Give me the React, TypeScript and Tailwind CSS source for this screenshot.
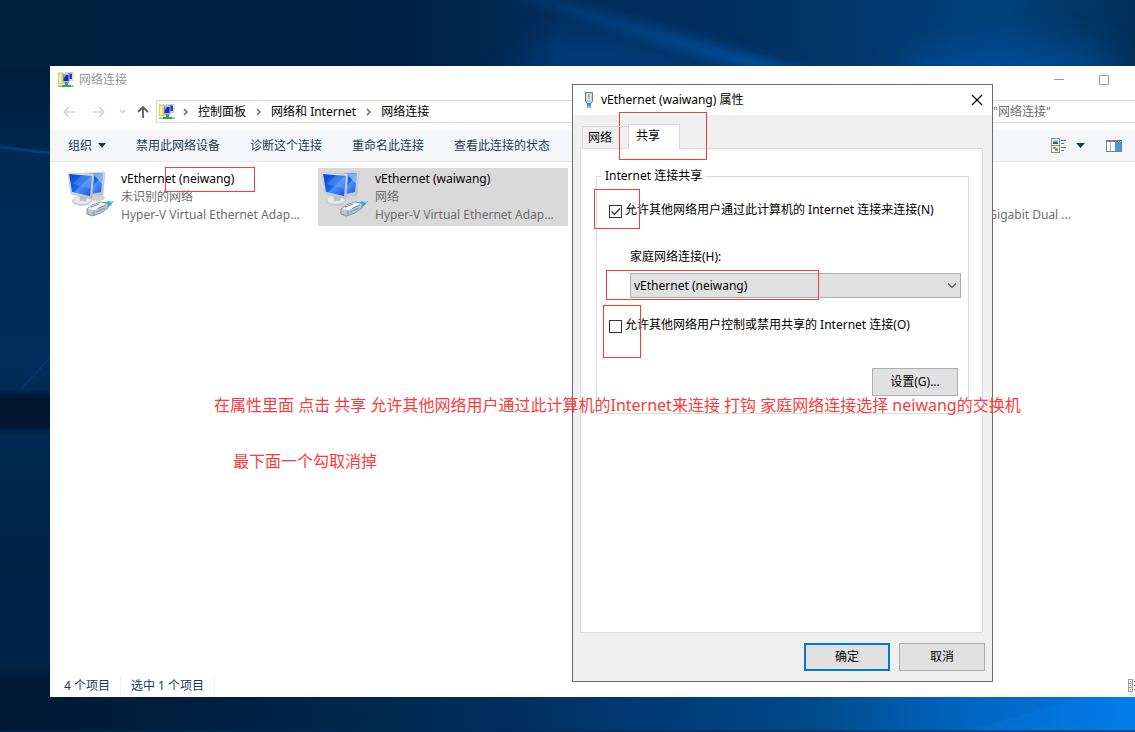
import type { ReactNode } from "react";

type Connection = {
  name?: string;
  status?: string;
  device: string;
  selected?: boolean;
  alignEnd?: boolean;
};

const connections: (Connection | null)[] = [
  {
    name: "vEthernet (neiwang)",
    status: "未识别的网络",
    device: "Hyper-V Virtual Ethernet Adap...",
  },
  {
    name: "vEthernet (waiwang)",
    status: "网络",
    device: "Hyper-V Virtual Ethernet Adap...",
    selected: true,
  },
  null,
  { device: "Gigabit Dual ...", alignEnd: true },
];

const commands = ["禁用此网络设备", "诊断这个连接", "重命名此连接", "查看此连接的状态"];

const crumbs = ["控制面板", "网络和 Internet", "网络连接"];

// Red marker boxes drawn over the desktop
const markers = [
  "left-[165px] top-[167px] w-[90px] h-[25px]",
  "left-[619px] top-[112px] w-[88px] h-[48px]",
  "left-[594px] top-[189px] w-[46px] h-[40px]",
  "left-[606px] top-[270px] w-[213px] h-[30px]",
  "left-[603px] top-[305px] w-[38px] h-[53px]",
];

function Wallpaper() {
  return (
    <svg
      className="absolute inset-0 h-full w-full"
      viewBox="0 0 1135 732"
      preserveAspectRatio="none"
      aria-hidden="true"
    >
      <defs>
        <linearGradient id="top" x1="0" x2="1" y1="0" y2="0">
          <stop offset="0" stopColor="#00203f" />
          <stop offset="0.35" stopColor="#002145" />
          <stop offset="0.5" stopColor="#002e5c" />
          <stop offset="0.65" stopColor="#00305f" />
          <stop offset="0.88" stopColor="#00427a" />
          <stop offset="1" stopColor="#003058" />
        </linearGradient>
        <linearGradient id="left" x1="0" x2="0" y1="0" y2="1">
          <stop offset="0" stopColor="#001e3d" />
          <stop offset="0.12" stopColor="#00264d" />
          <stop offset="0.13" stopColor="#002a54" />
          <stop offset="0.45" stopColor="#002d5a" />
          <stop offset="0.485" stopColor="#002b55" />
          <stop offset="0.5" stopColor="#00152d" />
          <stop offset="0.54" stopColor="#00152f" />
          <stop offset="0.555" stopColor="#002a54" />
          <stop offset="0.75" stopColor="#002346" />
          <stop offset="0.9" stopColor="#002448" />
          <stop offset="0.92" stopColor="#001a36" />
          <stop offset="1" stopColor="#001833" />
        </linearGradient>
        <linearGradient id="bottom" x1="0" x2="1" y1="0" y2="0">
          <stop offset="0" stopColor="#001833" />
          <stop offset="0.25" stopColor="#002347" />
          <stop offset="0.45" stopColor="#002f5e" />
          <stop offset="0.6" stopColor="#003d7a" />
          <stop offset="0.72" stopColor="#004b8a" />
          <stop offset="0.85" stopColor="#0065c0" />
          <stop offset="1" stopColor="#007ae6" />
        </linearGradient>
        <linearGradient id="beam" x1="0" x2="1" y1="0" y2="1">
          <stop offset="0" stopColor="#0055a5" stopOpacity="0.15" />
          <stop offset="1" stopColor="#0055a5" stopOpacity="0.8" />
        </linearGradient>
        <linearGradient id="glow" x1="0" x2="0" y1="0" y2="1">
          <stop offset="0" stopColor="#0050a0" stopOpacity="0" />
          <stop offset="1" stopColor="#0050a0" stopOpacity="0.5" />
        </linearGradient>
        <filter id="soft" x="-20%" y="-50%" width="140%" height="200%">
          <feGaussianBlur stdDeviation="4" />
        </filter>
        <filter id="haze" x="-40%" y="-100%" width="180%" height="300%">
          <feGaussianBlur stdDeviation="18" />
        </filter>
      </defs>
      <rect width="1135" height="732" fill="url(#top)" />
      <path d="M500 90 L560 30 L640 40 L780 90Z" fill="#0050a0" opacity="0.4" filter="url(#haze)" />
      <ellipse cx="1010" cy="72" rx="110" ry="24" fill="#0052a8" opacity="0.7" filter="url(#haze)" />
      <path d="M505 -5 L540 -5 L815 72 L750 72Z" fill="url(#beam)" filter="url(#soft)" />
      <rect y="66" width="50" height="666" fill="url(#left)" />
      <path d="M0 147 L50 153" stroke="#00498a" strokeWidth="3" opacity="0.7" />
      <path d="M22 388 L50 358" stroke="#01407a" strokeWidth="2" opacity="0.6" />
      <rect y="697" width="1135" height="35" fill="url(#bottom)" />
      <path d="M965 732 L1080 697 L1135 697 L1135 732Z" fill="#0a8bf5" opacity="0.15" />
      <rect y="730" width="1135" height="2" fill="#002b55" opacity="0.6" />
    </svg>
  );
}

function FolderNetIcon() {
  return (
    <svg width="16" height="16" viewBox="0 0 16 16" aria-hidden="true">
      <path d="M0 1h5l1 1h4v10H0z" fill="#f0d66c" stroke="#c9a840" strokeWidth="0.600" />
      <path d="M1 2.500h2V11H1z" fill="#fbf0b4" />
      <path d="M7 0h8.500v9H7z" fill="#c9ced3" />
      <path d="M8 1h6.500v6.500H8z" fill="#e9ecf0" />
      <path d="M9.500 1.500h4.500v5.500H9.500z" fill="#2340cc" />
      <path d="M4.500 2h7v8h-7z" fill="#aab2ba" />
      <path d="M5.500 3h5v6h-5z" fill="#0f2ec4" />
      <path d="M5.500 3h2.500l-2.500 4z" fill="#8ea6f6" />
      <path d="M6 10h5v1H6z" fill="#8d969e" />
      <path d="M7 11h3v2h3v2H4v-2h3z" fill="#1fa85a" />
      <path d="M0 13.500h4v1.500H0zM13 13.500h3v1.500h-3z" fill="#9ab3a6" />
    </svg>
  );
}

function AdapterIcon() {
  return (
    <svg width="48" height="48" viewBox="0 0 48 48" aria-hidden="true">
      <defs>
        <linearGradient id="screen" x1="0" x2="1" y1="0" y2="1">
          <stop offset="0" stopColor="#0f45d0" />
          <stop offset="0.5" stopColor="#1a66ee" />
          <stop offset="0.55" stopColor="#4a92fa" />
          <stop offset="1" stopColor="#1450e0" />
        </linearGradient>
        <linearGradient id="frame" x1="0" x2="1" y1="0" y2="1">
          <stop offset="0" stopColor="#f4f5f6" />
          <stop offset="1" stopColor="#b4babf" />
        </linearGradient>
      </defs>
      <ellipse cx="30" cy="28" rx="8" ry="3" fill="#d0d3d5" />
      <path d="M17 3 L38 2 L36 25 L24 27Z" fill="url(#frame)" stroke="#c2c7ca" strokeWidth="0.600" />
      <path d="M19 4 L36 3 L34 22 L25 24Z" fill="url(#screen)" />
      <path d="M26 4 L36 3 L35 14Z" fill="#a5ceff" opacity="0.7" />
      <ellipse cx="15" cy="31" rx="10" ry="5" fill="#c6cacd" />
      <ellipse cx="15" cy="30" rx="9" ry="4" fill="#e6e8e9" />
      <path d="M12 23 L21 25 L19 31 L13 31Z" fill="#bcc1c4" />
      <path d="M1 3 L27 4 L25 29 L4 24Z" fill="url(#frame)" stroke="#b4b9bd" strokeWidth="0.600" />
      <path d="M2 4 L25 6 L23 26 L5 22Z" fill="url(#screen)" />
      <path d="M15 5 L25 6 L24 19 L6 14Z" fill="#79b2ff" opacity="0.35" />
      <path d="M36 34 L41 31 L47 31 L44 35 L40 38Z" fill="#2fa9dd" />
      <path d="M41 31 L47 31 L44 33Z" fill="#8ddcf7" />
      <path
        d="M20 39 L25 35 L34 32 L41 33 L41 38 L34 43 L25 46 L20 44Z"
        fill="#b9c8d4"
        stroke="#6f8191"
        strokeWidth="0.800"
      />
      <path d="M21 39 L27 40.500 L40 34 L34 32.500 L25 35.500Z" fill="#eef4f8" />
      <path d="M27 40.500v5M31 38.500l8-3.500M24 37l8-3" stroke="#6f8191" strokeWidth="0.900" fill="none" />
      <path d="M21.500 40.500v3.500M23.500 41v3.500M25.500 41v3.500" stroke="#c9c48a" strokeWidth="0.900" />
      <path d="M29 42l9-4" stroke="#8799a8" strokeWidth="1.200" />
    </svg>
  );
}

function PlugIcon() {
  return (
    <svg width="10" height="16" viewBox="0 0 10 16" aria-hidden="true">
      <path d="M1.500 0.500h7v8.500l-1.500 2.500h-4L1.500 9z" fill="#c3d0dc" stroke="#6b7f92" />
      <path d="M3 1.500h4v6.500H3z" fill="#f1f6fa" />
      <path d="M5 2v5.500" stroke="#4f6579" />
      <path d="M3 12h4v2H3z" fill="#2b9fd4" />
      <path d="M3 14h1.500v2H3zM5.500 14H7v2H5.500z" fill="#3fb3e2" />
    </svg>
  );
}

function Crumb({ children }: { children: ReactNode }) {
  return (
    <>
      <svg width="5" height="8" viewBox="0 0 5 8" fill="none" stroke="#6b6b6b" strokeWidth="1.500" aria-hidden="true">
        <path d="M1 1l3 3-3 3" />
      </svg>
      <a href="#" className="text-black">
        {children}
      </a>
    </>
  );
}

function ConnectionTile({ item }: { item: Connection }) {
  return (
    <div className={`flex h-[58px] pl-[3px] pt-[2px] ${item.selected ? "bg-[#d9d9d9]" : ""}`}>
      {item.name && <AdapterIcon />}
      <div
        className={`flex w-[188px] flex-col leading-[18px] text-[#6d6d6d] ${
          item.alignEnd ? "ml-[54px] h-[54px] items-end justify-end" : "ml-[6px]"
        }`}
      >
        {item.name && <span className="whitespace-nowrap text-black">{item.name}</span>}
        {item.status && <span className="whitespace-nowrap">{item.status}</span>}
        <span className="whitespace-nowrap">{item.device}</span>
      </div>
    </div>
  );
}

function Explorer() {
  return (
    <section className="relative flex flex-1 flex-col bg-white">
      <header className="flex h-[34px] items-center pb-[6px] pl-2 pr-[26px]">
        <FolderNetIcon />
        <h1 className="ml-[5px] flex-1 text-[#999999]">网络连接</h1>
        <button type="button" aria-label="最小化" className="mr-[35px] h-[10px] w-[10px]">
          <svg width="10" height="10" viewBox="0 0 10 10" stroke="#999" aria-hidden="true">
            <path d="M0 4.500h10" />
          </svg>
        </button>
        <button type="button" aria-label="最大化" className="h-[10px] w-[10px] border border-[#999999]" />
      </header>

      <div className="flex h-[23px] items-center pl-[13px]">
        <button type="button" aria-label="后退">
          <svg width="12" height="12" viewBox="0 0 12 12" fill="none" stroke="#d2d2d2" strokeWidth="1.500">
            <path d="M12 6H1M6 1L1 6l5 5" />
          </svg>
        </button>
        <button type="button" aria-label="前进" className="ml-[18px]">
          <svg width="12" height="12" viewBox="0 0 12 12" fill="none" stroke="#d2d2d2" strokeWidth="1.500">
            <path d="M0 6h11M6 1l5 5-5 5" />
          </svg>
        </button>
        <button type="button" aria-label="最近位置" className="ml-[14px]">
          <svg width="7" height="5" viewBox="0 0 7 5" fill="none" stroke="#d2d2d2" strokeWidth="1.500">
            <path d="M1 1l2.500 2.500L6 1" />
          </svg>
        </button>
        <button type="button" aria-label="向上" className="ml-[11px]">
          <svg width="12" height="12" viewBox="0 0 12 12" fill="none" stroke="#5c5c5c" strokeWidth="1.800">
            <path d="M6 12V1M1 6l5-5 5 5" />
          </svg>
        </button>
        <nav className="ml-[7px] flex h-[23px] flex-1 items-center gap-2 border border-[#d9d9d9] pl-[2px]">
          <FolderNetIcon />
          <div className="flex items-center gap-[10px]">
            {crumbs.map((crumb) => (
              <Crumb key={crumb}>{crumb}</Crumb>
            ))}
          </div>
        </nav>
        <input
          type="search"
          aria-label="搜索"
          placeholder={'搜索"网络连接"'}
          className="ml-2 h-[23px] w-[172px] border border-r-0 border-[#d9d9d9] bg-white pl-[5px] placeholder:text-[#6d6d6d]"
        />
      </div>

      <div className="mt-[7px] flex h-[32px] items-center gap-[30px] border-b border-[#e5e7ea] bg-[#f4f6f9] pl-[18px] pr-[13px] text-[#1e395b]">
        <button type="button" className="flex items-center gap-[6px] whitespace-nowrap">
          组织
          <svg width="8" height="5" viewBox="0 0 8 5" fill="#1e395b" aria-hidden="true">
            <path d="M0 0h8L4 5z" />
          </svg>
        </button>
        {commands.map((command) => (
          <button key={command} type="button" className="whitespace-nowrap">
            {command}
          </button>
        ))}
        <div className="ml-auto flex items-center">
          <button type="button" aria-label="更改视图">
            <svg width="16" height="16" viewBox="0 0 16 16" shapeRendering="crispEdges" aria-hidden="true">
              <path d="M0.500 0.500h8v14h-8zM0.500 7.500h8" fill="#fff" stroke="#8b8b8b" />
              <path d="M2 2h5v2H2z" fill="#8cc4f2" />
              <path d="M2 4h5v2H2z" fill="#1f5f8f" />
              <path d="M2 9h3v2H2z" fill="#d9862f" />
              <path d="M4 10h3v3H4z" fill="#6fae3f" />
              <path d="M10 2h5v1h-5zM10 5h3v1h-3zM10 9h5v1h-5zM10 12h3v1h-3z" fill="#707070" />
            </svg>
          </button>
          <button type="button" aria-label="更多选项" className="ml-[9px]">
            <svg width="9" height="5" viewBox="0 0 9 5" fill="#1e395b">
              <path d="M0 0h9L4.500 5z" />
            </svg>
          </button>
          <button type="button" aria-label="预览窗格" className="ml-[21px]">
            <svg width="16" height="12" viewBox="0 0 16 12" shapeRendering="crispEdges">
              <path d="M0.500 0.500h15v11H0.500z" fill="#fff" stroke="#7d7d7d" />
              <path d="M0 0h16v2H0z" fill="#7d7d7d" />
              <path d="M4 2h1v9H4z" fill="#b5b5b5" />
              <path d="M9 2h6v9H9z" fill="#3f98e0" />
              <path d="M12 1h1v1h-1zM14 1h1v1h-1z" fill="#fff" />
            </svg>
          </button>
        </div>
      </div>

      <div className="grid flex-1 grid-cols-[repeat(4,250px)] content-start gap-x-1 overflow-hidden pl-[14px] pt-[6px]">
        {connections.map((item, index) =>
          item ? <ConnectionTile key={index} item={item} /> : <div key={index} />
        )}
      </div>

      <footer className="flex h-[25px] items-center overflow-hidden pl-[14px] pt-[2px] text-[#1e395b]">
        <span className="border-r border-[#f0f0f0] pr-[10px]">4 个项目</span>
        <span className="border-r border-[#f0f0f0] px-[10px]">选中 1 个项目</span>
        <svg className="ml-auto" width="7" height="13" viewBox="0 0 7 13" shapeRendering="crispEdges" aria-hidden="true">
          <path d="M0.500 0.500h4v12h-4zM0.500 4.500h4M0.500 8.500h4" fill="#fff" stroke="#9a9a9a" />
          <path d="M2 2h1v1H2z" fill="#5c7f5c" />
          <path d="M2 6h1v1H2z" fill="#2f8ee0" />
          <path d="M2 10h1v1H2z" fill="#d03030" />
          <path d="M6 2h1v1H6zM6 6h1v1H6zM6 10h1v1H6z" fill="#6b6b6b" />
        </svg>
      </footer>
    </section>
  );
}

function Checkbox({ id, label, checked }: { id: string; label: string; checked?: boolean }) {
  return (
    <div className="flex h-4 items-end gap-[3px]">
      <div className="relative h-[13px] w-[13px]">
        <input
          id={id}
          type="checkbox"
          defaultChecked={checked}
          className="peer block h-[13px] w-[13px] appearance-none border border-[#333333] bg-white"
        />
        <svg
          className="pointer-events-none absolute inset-0 hidden peer-checked:block"
          width="13"
          height="13"
          viewBox="0 0 13 13"
          fill="none"
          stroke="#333"
          strokeWidth="1.300"
          aria-hidden="true"
        >
          <path d="M2.500 6.500l3 3 5.500-6" />
        </svg>
      </div>
      <label htmlFor={id} className="whitespace-nowrap leading-4">
        {label}
      </label>
    </div>
  );
}

function PropertiesDialog() {
  return (
    <div
      role="dialog"
      aria-labelledby="dialog-title"
      className="absolute left-[572px] top-[84px] w-[421px] border border-[#6b6b6b] bg-[#f0f0f0] text-black"
    >
      <header className="flex h-[30px] items-center bg-white pl-[11px] pr-[9px]">
        <PlugIcon />
        <h2 id="dialog-title" className="ml-[7px] flex-1">
          vEthernet (waiwang) 属性
        </h2>
        <button type="button" aria-label="关闭">
          <svg width="12" height="12" viewBox="0 0 12 12" stroke="#000" strokeWidth="1.200">
            <path d="M1 1l10 10M11 1L1 11" />
          </svg>
        </button>
      </header>

      <div className="px-[7px] pb-[10px] pt-[9px]">
        <div role="tablist" className="relative z-10 -mb-px flex items-end pl-[2px]">
          <button
            type="button"
            role="tab"
            aria-selected="false"
            className="mb-px h-[22px] w-[46px] whitespace-nowrap border border-b-0 border-r-0 border-[#d9d9d9] pl-[5px] text-left"
          >
            网络
          </button>
          <button
            type="button"
            role="tab"
            aria-selected="true"
            className="h-[25px] w-[52px] whitespace-nowrap border border-b-0 border-[#d9d9d9] bg-white pb-[2px] pl-[7px] text-left"
          >
            共享
          </button>
        </div>

        <div role="tabpanel" className="mr-[2px] h-[485px] border border-[#dcdcdc] bg-white pl-[15px] pr-[13px] pt-[19px]">
          <fieldset className="min-w-0 border border-[#dcdcdc] pb-[17px] pl-3 pr-[7px] pt-[18px]">
            <legend className="-ml-[7px] px-[3px] leading-4">Internet 连接共享</legend>
            <Checkbox id="allow-connect" label="允许其他网络用户通过此计算机的 Internet 连接来连接(N)" checked />
            <div className="mt-[31px] pl-[21px]">
              <label htmlFor="home-network" className="block leading-4">
                家庭网络连接(H):
              </label>
              <div className="relative mt-2">
                <select
                  id="home-network"
                  className="block h-[25px] w-full appearance-none border border-[#adadad] bg-[#e1e1e1] pl-[3px]"
                >
                  <option>vEthernet (neiwang)</option>
                </select>
                <svg
                  className="pointer-events-none absolute right-1 top-[10px]"
                  width="10"
                  height="6"
                  viewBox="0 0 10 6"
                  fill="none"
                  stroke="#555"
                  strokeWidth="1.200"
                  aria-hidden="true"
                >
                  <path d="M1 0.500l4 4 4-4" />
                </svg>
              </div>
            </div>
            <div className="mt-[19px]">
              <Checkbox id="allow-control" label="允许其他网络用户控制或禁用共享的 Internet 连接(O)" />
            </div>
            <div className="mt-[35px] flex justify-end pr-[3px]">
              <button type="button" className="h-7 w-[86px] border border-[#adadad] bg-[#e1e1e1]">
                设置(G)...
              </button>
            </div>
          </fieldset>
        </div>

        <div className="mt-[10px] flex justify-end gap-[9px]">
          <button type="button" className="h-7 w-[86px] border-2 border-[#0078d7] bg-[#e1e1e1]">
            确定
          </button>
          <button type="button" className="h-7 w-[86px] border border-[#adadad] bg-[#e1e1e1]">
            取消
          </button>
        </div>
      </div>
    </div>
  );
}

export default function App() {
  return (
    <main className="relative flex min-h-screen flex-col overflow-hidden bg-[#00203f] pb-[35px] pl-[50px] pt-[66px] font-['Noto_Sans','Noto_Sans_CJK_SC',sans-serif] text-[12px] leading-[18px]">
      <Wallpaper />
      <Explorer />
      <PropertiesDialog />

      {markers.map((marker) => (
        <div key={marker} className={`pointer-events-none absolute border border-[#fb3b3b] ${marker}`} />
      ))}
      <p className="absolute left-[214px] top-[393px] whitespace-nowrap text-base leading-6 text-[#fb3b3b]">
        在属性里面 点击 共享 允许其他网络用户通过此计算机的Internet来连接 打钩 家庭网络连接选择 neiwang的交换机
      </p>
      <p className="absolute left-[233px] top-[449px] whitespace-nowrap text-base leading-6 text-[#fb3b3b]">
        最下面一个勾取消掉
      </p>
    </main>
  );
}
